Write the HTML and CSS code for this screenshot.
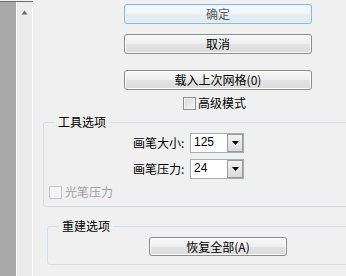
FILE: index.html
```html
<!DOCTYPE html>
<html lang="zh-CN">
<head>
<meta charset="utf-8">
<link rel="stylesheet" href="styles.css">
</head>
<body>
<div class="page">
  <div class="side">
    <div class="strip"></div>
    <div class="track">
      <svg class="up" width="7" height="5" viewBox="0 0 7 5"><path d="M3.5 0.5 L6.5 4.5 L0.5 4.5 Z" fill="#6a6a6a"/></svg>
    </div>
  </div>
  <div class="main">
    <button class="btn btn-default btn-wide first">确定</button>
    <button class="btn btn-wide second">取消</button>
    <button class="btn btn-wide third">载入上次网格(0)</button>
    <label class="check adv"><span class="box"></span><span>高级模式</span></label>
    <fieldset class="group tools">
      <legend>工具选项</legend>
      <div class="row r1">
        <span class="lbl">画笔大小:</span>
        <div class="combo"><span class="val">125</span><span class="arrow"><svg width="7" height="4" viewBox="0 0 7 4"><path d="M0 0 H7 L3.5 4 Z" fill="#000"/></svg></span></div>
      </div>
      <div class="row r2">
        <span class="lbl">画笔压力:</span>
        <div class="combo"><span class="val">24</span><span class="arrow"><svg width="7" height="4" viewBox="0 0 7 4"><path d="M0 0 H7 L3.5 4 Z" fill="#000"/></svg></span></div>
      </div>
      <label class="check pen"><span class="box disabled"></span><span class="dis-text">光笔压力</span></label>
    </fieldset>
    <fieldset class="group rebuild">
      <legend>重建选项</legend>
      <button class="btn restore">恢复全部(A)</button>
    </fieldset>
  </div>
</div>
</body>
</html>
```
FILE: styles.css
```css
html, body {
  margin: 0;
  padding: 0;
  background: #f0f0f0;
}
body {
  font-family: "Noto Sans CJK SC", "Liberation Sans", sans-serif;
  font-size: 12px;
  color: #000;
}
.page {
  display: flex;
  height: 276px;
  overflow: hidden;
}
.side {
  display: flex;
  margin-top: 1px;
  border-top: 1px solid #6e6e6e;
  flex: none;
}
.strip {
  width: 16px;
  background: #a8a8a8;
}
.track {
  width: 15px;
  background: #ebebeb;
  border-left: 1px solid #ffffff;
  border-right: 1px solid #fbfbfb;
}
.up {
  display: block;
  margin: 8px 0 0 4px;
}
.main {
  flex: 1;
  display: flex;
  flex-direction: column;
  align-items: flex-start;
  padding-top: 4px;
  overflow: hidden;
}
.btn {
  box-sizing: border-box;
  height: 20px;
  padding: 0;
  border: 1px solid #8c8c8c;
  border-radius: 3px;
  background: linear-gradient(#f7f7f7 0%, #eeeeee 50%, #e3e3e3 51%, #dcdcdc 100%);
  box-shadow: inset 0 0 0 1px #fbfbfb;
  font-family: "Noto Sans CJK SC", "Liberation Sans", sans-serif;
  font-size: 12px;
  line-height: 18px;
  color: #000;
}
.btn-wide {
  width: 188px;
  margin-left: 91px;
}
.btn-default {
  border-color: #88b9de;
  box-shadow: inset 0 0 0 1px #e4f2fb;
  background: linear-gradient(#f5f9fc 0%, #eef4f8 50%, #e6eef4 51%, #e1eaf1 100%);
  color: #5a5a5a;
}
.second { margin-top: 10px; }
.third { margin-top: 16px; }
.check {
  display: flex;
  align-items: center;
  height: 14px;
  line-height: 14px;
}
.box {
  box-sizing: border-box;
  width: 13px;
  height: 13px;
  border: 1px solid #8e8f8f;
  background: linear-gradient(135deg, #d6d6d6, #f7f7f7);
  box-shadow: inset 0 0 0 1px #f2f2f2;
  margin-right: 2px;
}
.box.disabled {
  border-color: #c5c5c5;
  background: #f4f4f4;
  box-shadow: none;
  margin-right: 3px;
}
.dis-text { color: #a0a0a0; }
.adv {
  margin-top: 6px;
  margin-left: 150px;
}
.group {
  align-self: stretch;
  margin: 0 -20px 0 0;
  padding: 0 0 0 5px;
  border: 1px solid #d5dfe5;
  border-radius: 3px;
  min-inline-size: 0;
}
.group legend {
  margin-left: 6px;
  padding: 0 3px;
  line-height: 14px;
  font-size: 12px;
}
.tools {
  margin-top: 5px;
  margin-left: 10px;
  padding-bottom: 7px;
}
.rebuild {
  margin-top: 12px;
  margin-left: 14px;
  padding-bottom: 8px;
}
.row {
  display: flex;
  align-items: center;
  padding-left: 84px;
}
.r1 { margin-top: 4px; }
.r2 { margin-top: 6px; }
.lbl {
  width: 51px;
  margin-right: 6px;
  text-align: right;
  white-space: nowrap;
  line-height: 14px;
}
.combo {
  box-sizing: border-box;
  width: 54px;
  height: 20px;
  border: 1px solid #a5acb5;
  background: #fff;
  display: flex;
}
.val {
  flex: 1;
  padding-left: 3px;
  font-family: "Liberation Sans", sans-serif;
  font-size: 12px;
  line-height: 17px;
}
.arrow {
  box-sizing: border-box;
  width: 16px;
  height: 18px;
  border: 1px solid #9a9a9a;
  background: linear-gradient(#f3f3f3, #dadada);
  display: flex;
  align-items: center;
  justify-content: center;
}
.pen { margin-top: 6px; }
.restore {
  width: 138px;
  height: 19px;
  line-height: 17px;
  margin-top: 4px;
  margin-left: 96px;
}
```
